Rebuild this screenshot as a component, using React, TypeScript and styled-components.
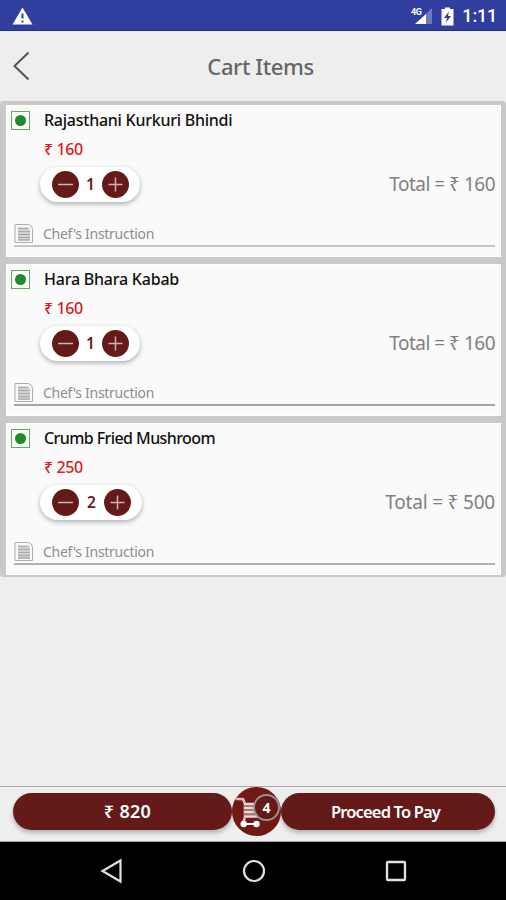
import React from "react";
import styled, { createGlobalStyle } from "styled-components";

const MAROON = "#641a18";

const GlobalStyle = createGlobalStyle`
  * { box-sizing: border-box; }
  body { margin: 0; background: #eee; font-family: "Noto Sans", sans-serif; }
  svg { display: block; flex: none; }
`;

const Screen = styled.main`
  width: 506px;
  height: 900px;
  display: flex;
  flex-direction: column;
  background: #eeeeee;
  overflow: hidden;
`;

const StatusBar = styled.div`
  height: 31px;
  flex: none;
  display: flex;
  align-items: center;
  padding: 2px 9px 0 12px;
  background: #303f9f;
  border-bottom: 1px solid #202f91;
  color: #fff;
`;

const StatusRight = styled.div`
  display: flex;
  align-items: center;
  gap: 8px;
  margin-left: auto;
`;

const Label = styled.span<{ $size: number; $track?: number; $weight?: number; $color?: string }>`
  font-size: ${(p) => p.$size}px;
  letter-spacing: ${(p) => p.$track ?? 0}px;
  font-weight: ${(p) => p.$weight ?? 400};
  color: ${(p) => p.$color ?? "inherit"};
  line-height: 20px;
  white-space: nowrap;
`;

const Clock = styled(Label)`
  font-family: Roboto, sans-serif;
`;

const Header = styled.header`
  height: 70px;
  flex: none;
  display: grid;
  grid-template-columns: 50px 1fr 35px;
  align-items: center;
  justify-items: center;
`;

const BackButton = styled.button`
  border: 0;
  padding: 0;
  background: none;
  justify-self: start;
  margin-left: 12px;
`;

const CartList = styled.section`
  flex: none;
  height: 476px;
  padding: 4px 5px 2px 6px;
  display: flex;
  flex-direction: column;
  gap: 7px;
  background: #c9c9c9;
  border-radius: 3px;
`;

const Card = styled.article`
  height: 152px;
  flex: none;
  padding: 5px 5px 0;
  background: #fafafa;
  border: 1px solid #fff;
  display: flex;
  flex-direction: column;
`;

const NameRow = styled.div`
  display: flex;
  align-items: center;
  height: 18px;
  gap: 14px;
`;

const VegMark = styled.span`
  width: 19px;
  height: 19px;
  margin-left: -1px;
  border: 1px solid #62ab68;
  display: flex;
  align-items: center;
  justify-content: center;
  &::after {
    content: "";
    width: 11px;
    height: 11px;
    border-radius: 50%;
    background: #1f8a29;
  }
`;

const PriceRow = styled.div`
  height: 20px;
  margin: 10px 0 0 32px;
  display: flex;
`;

const QuantityRow = styled.div`
  display: flex;
  align-items: center;
  justify-content: space-between;
  height: 36px;
  margin: 7px 0 0 28px;
`;

const Stepper = styled.div`
  height: 35px;
  padding: 0 11px 0 12px;
  border-radius: 18px;
  background: #fff;
  box-shadow: 0 2px 5px rgba(0, 0, 0, 0.3);
  display: flex;
  align-items: center;
`;

const Count = styled(Label)<{ $wide: boolean }>`
  width: ${(p) => (p.$wide ? 25 : 23)}px;
  text-align: center;
`;

const RoundButton = styled.button`
  width: 27px;
  height: 27px;
  padding: 0;
  border: 0;
  border-radius: 50%;
  background: ${MAROON};
`;

const Instruction = styled.div<{ $line: string }>`
  height: 25px;
  margin: 20px 0 0 2px;
  display: flex;
  align-items: center;
  gap: 9px;
  border-bottom: 2px solid ${(p) => p.$line};
`;

const Footer = styled.footer`
  height: 56px;
  flex: none;
  margin-top: auto;
  border-top: 1px solid #aaa;
  border-bottom: 1px solid #a0a0a0;
  display: flex;
  align-items: center;
  padding: 0 11px 5px 13px;
`;

const PillButton = styled.button<{ $width: number; $shift: number }>`
  width: ${(p) => p.$width}px;
  height: 37px;
  padding: 0 ${(p) => Math.max(-p.$shift, 0)}px 0 ${(p) => Math.max(p.$shift, 0)}px;
  border: 0;
  border-radius: 19px;
  background: ${MAROON};
  color: #fff;
  font-family: inherit;
  box-shadow: 0 3px 4px rgba(0, 0, 0, 0.25);
`;

const CartButton = styled.button`
  width: 49px;
  height: 49px;
  flex: none;
  padding: 0;
  border: 0;
  border-radius: 50%;
  background: #701a18;
  position: relative;
  font-family: inherit;
`;

const Badge = styled.span`
  position: absolute;
  top: 7px;
  right: 1px;
  width: 27px;
  height: 27px;
  border: 2px solid #989292;
  border-radius: 50%;
  background: ${MAROON};
  display: flex;
  align-items: center;
  justify-content: center;
`;

const NavBar = styled.nav`
  height: 58px;
  flex: none;
  background: #000;
  display: flex;
  justify-content: space-between;
  align-items: center;
  padding: 0 98px 0 100px;
`;

const NoteIcon = () => (
  <svg width="20" height="21" viewBox="0 0 20 21" fill="none" stroke="#ababab">
    <path d="M1 1.5H14.5Q18.5 2.5 18.5 6.5V19.5H1Z" strokeWidth="1" />
    <path d="M4 4.5H16V17.5H4Z" fill="#dedede" stroke="none" />
    <path d="M4 5.5H14M4 8.5H16M4 11.5H16M4 14.5H16M4 17H16" strokeWidth="1.6" />
  </svg>
);

const StepIcon = ({ plus }: { plus?: boolean }) => (
  <svg width="27" height="27" viewBox="0 0 27 27" stroke="#d5b0ad" strokeWidth="1.5">
    <path d={plus ? "M6.5 13.5H20.5M13.5 6.5V20.5" : "M6 13.5H21"} />
  </svg>
);

const items = [
  { name: "Rajasthani Kurkuri Bhindi", track: -0.25, totalTrack: -0.5, price: 160, count: 1, line: "#c4c4c4" },
  { name: "Hara Bhara Kabab", track: -0.22, totalTrack: -0.5, price: 160, count: 1, line: "#a4a4a4" },
  { name: "Crumb Fried Mushroom", track: -0.58, totalTrack: -0.2, price: 250, count: 2, line: "#b2b2b2" },
];

export default function App() {
  return (
    <Screen>
      <GlobalStyle />
      <StatusBar>
        <svg width="21" height="18" viewBox="0 0 21 18">
          <path d="M10.5 0.5L20.5 17.5H0.5Z" fill="#fff" />
          <path d="M10.5 6.5V11.5M10.5 13.5V15.5" stroke="#303f9f" strokeWidth="2" />
        </svg>
        <StatusRight>
          <svg width="22" height="20" viewBox="0 0 22 20">
            <path d="M21 2V18H15V8Z" fill="#6e79bb" />
            <path d="M15 8V18H4Z" fill="#fff" />
            <text x="0" y="9" fill="#fff" fontSize="9" fontWeight="700" fontFamily="Roboto" textLength="11">4G</text>
          </svg>
          <svg width="13" height="19" viewBox="0 0 13 19">
            <path d="M4 0.5H9V2H12.5V18.5H0.5V2H4Z" fill="#fff" />
            <path d="M8 4.5L3 11H6L5 15.5L10 9H7Z" fill="#303f9f" />
          </svg>
          <Clock $size={18} $weight={500} $track={-0.2}>1:11</Clock>
        </StatusRight>
      </StatusBar>

      <Header>
        <BackButton aria-label="Back">
          <svg width="19" height="30" viewBox="0 0 19 30" fill="none" stroke="#555" strokeWidth="2">
            <path d="M16.5 1.5L2.5 15L16.5 28.5" />
          </svg>
        </BackButton>
        <Label as="h1" $size={22} $weight={500} $color="#666" $track={-0.4}>Cart Items</Label>
      </Header>

      <CartList>
        {items.map((item) => (
          <Card key={item.name}>
            <NameRow>
              <VegMark />
              <Label $size={16} $weight={500} $color="#111" $track={item.track}>{item.name}</Label>
            </NameRow>
            <PriceRow>
              <Label $size={16} $weight={500} $color="#dc1c24" $track={-0.4}>₹ {item.price}</Label>
            </PriceRow>
            <QuantityRow>
              <Stepper>
                <RoundButton aria-label="Remove one"><StepIcon /></RoundButton>
                <Count $size={15.5} $weight={600} $color={MAROON} $wide={item.count > 1}>{item.count}</Count>
                <RoundButton aria-label="Add one"><StepIcon plus /></RoundButton>
              </Stepper>
              <Label $size={19} $color="#808080" $track={item.totalTrack}>Total = ₹ {item.price * item.count}</Label>
            </QuantityRow>
            <Instruction $line={item.line}>
              <NoteIcon />
              <Label $size={14} $color="#8d8d8d" $track={-0.29}>Chef's Instruction</Label>
            </Instruction>
          </Card>
        ))}
      </CartList>

      <Footer>
        <PillButton $width={219} $shift={10}><Label $size={18} $weight={600} $track={0.3}>₹ 820</Label></PillButton>
        <CartButton aria-label="Cart">
          <svg width="49" height="49" viewBox="0 0 49 49" fill="none">
            <path d="M5 12H11L13 17V30L11 36" stroke="#e0b9b7" strokeWidth="2.6" strokeLinecap="round" strokeLinejoin="round" />
            <path d="M12 15.5H29L27 31H12Z" fill="#ae7a78" />
            <path d="M12 17H28M12 21H28M12 25H28M12 29.5H27.5" stroke="#edd6d5" strokeWidth="2.2" />
            <path d="M12 37H24.5" stroke="#fff" strokeWidth="2" />
            <circle cx="11.7" cy="37" r="3.2" fill="#fff" />
            <circle cx="24.5" cy="37" r="3.2" fill="#fff" />
          </svg>
          <Badge><Label $size={14} $weight={700} $color="#fff">4</Label></Badge>
        </CartButton>
        <PillButton $width={214} $shift={-5}><Label $size={16.5} $weight={600} $track={-0.85}>Proceed To Pay</Label></PillButton>
      </Footer>

      <NavBar>
        <svg width="24" height="26" viewBox="0 0 24 26" fill="none" stroke="#e0e0e0" strokeWidth="2.2">
          <path d="M20.5 2.5V23.5L2.5 13Z" />
        </svg>
        <svg width="24" height="24" viewBox="0 0 24 24" fill="none" stroke="#e0e0e0" strokeWidth="2.2">
          <circle cx="12" cy="12" r="10" />
        </svg>
        <svg width="24" height="24" viewBox="0 0 24 24" fill="none" stroke="#e0e0e0" strokeWidth="2.4">
          <rect x="3" y="3" width="18" height="18" rx="1" />
        </svg>
      </NavBar>
    </Screen>
  );
}
